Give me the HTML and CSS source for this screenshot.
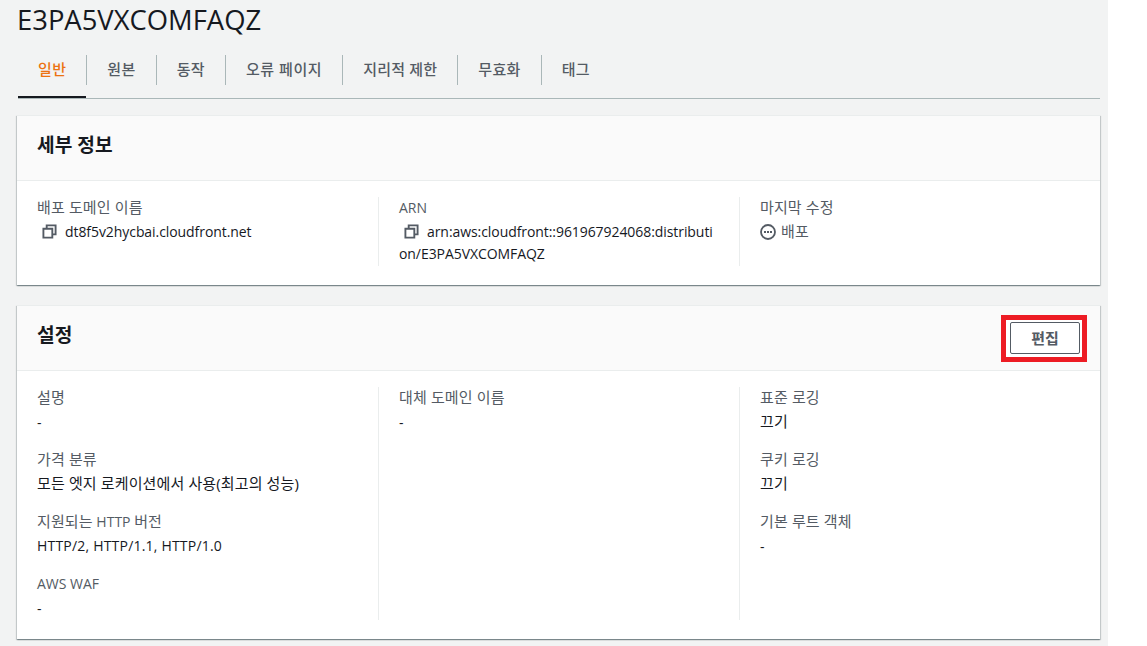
FILE: index.html
```html
<!DOCTYPE html>
<html lang="ko">
<head>
<meta charset="utf-8">
<title>E3PA5VXCOMFAQZ</title>
<link rel="stylesheet" href="styles.css">
</head>
<body>
<main class="page">
  <h1 class="title">E3PA5VXCOMFAQZ</h1>
  <nav class="tabs">
    <a class="tab active"><span class="ko">일반</span></a>
    <a class="tab"><span class="ko">원본</span></a>
    <a class="tab"><span class="ko">동작</span></a>
    <a class="tab wide"><span class="ko">오류 페이지</span></a>
    <a class="tab tight"><span class="ko">지리적 제한</span></a>
    <a class="tab"><span class="ko">무효화</span></a>
    <a class="tab last"><span class="ko">태그</span></a>
  </nav>
  <section class="card first">
    <header class="card-head"><h2>세부 정보</h2></header>
    <div class="cols short">
      <div class="col">
        <div class="item">
          <div class="label"><span class="ko">배포 도메인 이름</span></div>
          <div class="value up copy">
            <svg class="icon" viewBox="0 0 16 16"><path d="M5 5V1.5h9.5V11H11M1.5 5H11v9.5H1.5z" fill="none" stroke="#545b64" stroke-width="2"/></svg>dt8f5v2hycbai.cloudfront.net
          </div>
        </div>
      </div>
      <div class="col">
        <div class="item">
          <div class="label">ARN</div>
          <div class="value up arn">
            <svg class="icon" viewBox="0 0 16 16"><path d="M5 5V1.5h9.5V11H11M1.5 5H11v9.5H1.5z" fill="none" stroke="#545b64" stroke-width="2"/></svg>arn:aws:cloudfront::961967924068:distribution/E3PA5VXCOMFAQZ
          </div>
        </div>
      </div>
      <div class="col">
        <div class="item">
          <div class="label"><span class="ko">마지막 수정</span></div>
          <div class="value up status">
            <svg class="status-icon" viewBox="0 0 16 16"><circle cx="8" cy="8" r="7" fill="none" stroke="#545b64" stroke-width="1.8"/><path d="M4 7h2v2H4zM7 7h2v2H7zM10 7h2v2h-2z" fill="#545b64"/></svg><span class="ko">배포</span>
          </div>
        </div>
      </div>
    </div>
  </section>
  <section class="card">
    <header class="card-head">
      <h2>설정</h2>
      <div class="mark"><button class="btn" type="button">편집</button></div>
    </header>
    <div class="cols">
      <div class="col">
        <div class="item"><div class="label"><span class="ko">설명</span></div><div class="value">-</div></div>
        <div class="item"><div class="label"><span class="ko">가격 분류</span></div><div class="value up"><span class="ko">모든 엣지 로케이션에서 사용(최고의 성능)</span></div></div>
        <div class="item"><div class="label"><span class="ko">지원되는</span> HTTP <span class="ko">버전</span></div><div class="value up http">HTTP/2, HTTP/1.1, HTTP/1.0</div></div>
        <div class="item"><div class="label">AWS WAF</div><div class="value">-</div></div>
      </div>
      <div class="col">
        <div class="item"><div class="label"><span class="ko">대체 도메인 이름</span></div><div class="value">-</div></div>
      </div>
      <div class="col">
        <div class="item"><div class="label"><span class="ko">표준 로깅</span></div><div class="value up"><span class="ko">끄기</span></div></div>
        <div class="item"><div class="label"><span class="ko">쿠키 로깅</span></div><div class="value up"><span class="ko">끄기</span></div></div>
        <div class="item"><div class="label"><span class="ko">기본 루트 객체</span></div><div class="value">-</div></div>
      </div>
    </div>
  </section>
</main>
</body>
</html>
```
FILE: styles.css
```css
* { box-sizing: border-box; }
html, body { margin: 0; height: 100%; background: #fff; overflow: hidden; }
body {
  font-family: "Open Sans", "Noto Sans CJK KR", sans-serif;
  font-size: 14px;
  line-height: 22px;
  color: #16191f;
}
.ko {
  font-size: 15px;
  letter-spacing: .13px;
  line-height: 20px;
}
.page {
  width: 1108px;
  height: 646px;
  background: #f2f3f3;
  padding: 0 8px 0 17px;
}
.title {
  margin: 0;
  padding: 0 0 0 1px;
  height: 55px;
  font-size: 27.4px;
  line-height: 40px;
  font-weight: 400;
  text-indent: -1px;
}
.tabs {
  display: flex;
  height: 44px;
  margin-left: 1px;
  border-bottom: 1px solid #aab7b8;
  align-items: flex-start;
}
.tab {
  height: 30px;
  padding: 0 20px;
  line-height: 29px;
  color: #545b64;
  font-weight: 500;
  border-right: 1px solid #aab7b8;
}
.tab .ko { letter-spacing: .35px; }
.tab.wide .ko { letter-spacing: .55px; }
.tab.tight .ko { letter-spacing: .2px; }
.tab.last { border-right: 0; }
.tab.active { color: #ec7211; position: relative; }
.tab.active::after {
  content: "";
  position: absolute;
  left: 0;
  right: 0;
  top: 41px;
  height: 2px;
  background: #16191f;
}
.card {
  margin-top: 20px;
  background: #fff;
  box-shadow: 0 1px 1px 0 rgba(0, 28, 36, .3), 1px 1px 1px 0 rgba(0, 28, 36, .15), -1px 1px 1px 0 rgba(0, 28, 36, .15);
  border-top: 1px solid #eaeded;
}
.card.first { margin-top: 16px; }
.card-head {
  display: flex;
  align-items: center;
  justify-content: space-between;
  height: 65px;
  padding: 0 20px;
  background: #fafafa;
  border-bottom: 1px solid #eaeded;
}
.card-head h2 {
  margin: -6px 0 0;
  font-size: 19.2px;
  line-height: 22px;
  font-weight: 700;
}
.mark {
  display: flex;
  margin-right: -7px;
  padding: 2px 2px 3px 4px;
  border: 5px solid #ed1c24;
  background: #fff;
}
.btn {
  width: 70px;
  height: 32px;
  padding: 0;
  font: 700 15px/20px "Noto Sans CJK KR", sans-serif;
  color: #545b64;
  background: #fff;
  border: 1px solid #545b64;
  border-radius: 2px;
}
.cols {
  display: grid;
  grid-template-columns: repeat(3, 1fr);
  padding: 16px 0 19px;
}
.cols.short { height: 104px; }
.col { padding: 0 20px; border-left: 1px solid #eaeded; }
.col:first-child { border-left: 0; }
.item { height: 62px; }
.item:last-child { height: auto; }
.label { color: #545b64; height: 25px; line-height: 22px; }
.value { line-height: 22px; }
.value.up { margin-top: -1px; }
.copy, .arn { word-break: break-all; letter-spacing: -.07px; }
.http { letter-spacing: .2px; }
.icon {
  width: 15px;
  height: 15px;
  margin: 0 8px 0 5px;
  vertical-align: -2px;
}
.status { color: #545b64; }
.status-icon {
  width: 16px;
  height: 16px;
  margin-right: 5px;
  vertical-align: -3px;
}
```
